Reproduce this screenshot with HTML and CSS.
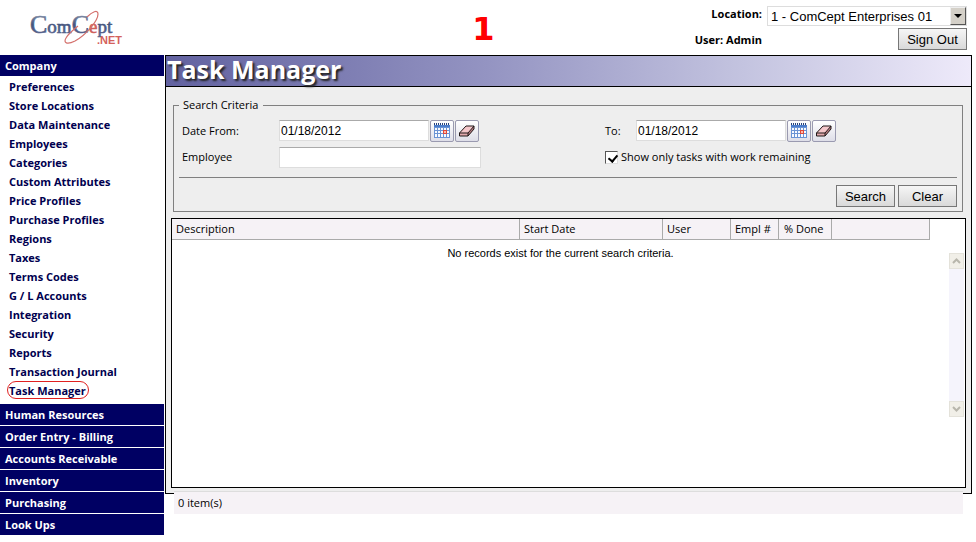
FILE: index.html
```html
<!DOCTYPE html>
<html lang="en">
<head>
  <meta charset="UTF-8">
  <meta name="viewport" content="width=device-width, initial-scale=1.0">
  <title>ComCept .NET - Task Manager</title>
  <link rel="stylesheet" href="styles.css">
</head>
<body>
  <header class="header">
    <svg class="logo" width="98" height="40" viewBox="0 0 98 40" role="img" aria-label="ComCept .NET">
      <defs>
        <linearGradient id="metal" x1="0" y1="0" x2="0" y2="1">
          <stop offset="0" stop-color="#9aa6b8"/>
          <stop offset="0.5" stop-color="#46557e"/>
          <stop offset="1" stop-color="#5f6a94"/>
        </linearGradient>
      </defs>
      <text class="logo-name" x="1" y="25"><tspan class="logo-cap">C</tspan><tspan>om</tspan><tspan class="logo-cap">C</tspan><tspan class="logo-e">e</tspan><tspan>pt</tspan></text>
      <path d="M58 9C63 4 69 1 69 6C69 13 57 27 46 33C38 37 34 35 37 30C39 26 44 22 49 18" fill="none" stroke="#d4706c" stroke-width="1.2"/>
      <text class="logo-net" x="68" y="36">.NET</text>
    </svg>
    <div class="step">1</div>
    <div class="session">
      <label for="location">Location:</label>
      <div class="select-wrap">
        <select id="location">
          <option>1 - ComCept Enterprises 01</option>
        </select>
        <span class="select-arrow"><svg width="8" height="4" viewBox="0 0 8 4"><path d="M0 0H8L4 4Z"/></svg></span>
      </div>
      <span class="user">User: Admin</span>
      <button class="btn sign-out" type="button">Sign Out</button>
    </div>
  </header>

  <div class="layout">
    <nav class="sidebar">
      <a class="section" href="#">Company</a>
      <ul class="menu">
        <li><a href="#">Preferences</a></li>
        <li><a href="#">Store Locations</a></li>
        <li><a href="#">Data Maintenance</a></li>
        <li><a href="#">Employees</a></li>
        <li><a href="#">Categories</a></li>
        <li><a href="#">Custom Attributes</a></li>
        <li><a href="#">Price Profiles</a></li>
        <li><a href="#">Purchase Profiles</a></li>
        <li><a href="#">Regions</a></li>
        <li><a href="#">Taxes</a></li>
        <li><a href="#">Terms Codes</a></li>
        <li><a href="#">G / L Accounts</a></li>
        <li><a href="#">Integration</a></li>
        <li><a href="#">Security</a></li>
        <li><a href="#">Reports</a></li>
        <li><a href="#">Transaction Journal</a></li>
        <li><a class="current" href="#">Task Manager</a></li>
      </ul>
      <a class="section" href="#">Human Resources</a>
      <a class="section" href="#">Order Entry - Billing</a>
      <a class="section" href="#">Accounts Receivable</a>
      <a class="section" href="#">Inventory</a>
      <a class="section" href="#">Purchasing</a>
      <a class="section" href="#">Look Ups</a>
    </nav>

    <main class="main">
      <div class="panel">
        <h1>Task Manager</h1>

        <form class="search">
          <fieldset>
            <legend>Search Criteria</legend>
            <div class="fields">
              <label for="dateFrom">Date From:</label>
              <div class="date">
                <input type="text" id="dateFrom" value="01/18/2012">
                <button class="icon-btn" type="button" aria-label="Pick start date"><svg width="16" height="16" viewBox="0 0 16 16"><use href="#calendar"/></svg></button>
                <button class="icon-btn" type="button" aria-label="Clear start date"><svg width="18" height="16" viewBox="0 0 18 16"><use href="#eraser"/></svg></button>
              </div>
              <label for="dateTo">To:</label>
              <div class="date">
                <input type="text" id="dateTo" value="01/18/2012">
                <button class="icon-btn" type="button" aria-label="Pick end date"><svg width="16" height="16" viewBox="0 0 16 16"><use href="#calendar"/></svg></button>
                <button class="icon-btn" type="button" aria-label="Clear end date"><svg width="18" height="16" viewBox="0 0 18 16"><use href="#eraser"/></svg></button>
              </div>
              <label for="employee">Employee</label>
              <input class="employee" type="text" id="employee">
              <label class="check"><input type="checkbox" checked>Show only tasks with work remaining</label>
            </div>
            <div class="actions">
              <button class="btn" type="button">Search</button>
              <button class="btn" type="button">Clear</button>
            </div>
          </fieldset>
        </form>

        <div class="results">
          <table>
            <thead>
              <tr>
                <th>Description</th>
                <th class="col-start">Start Date</th>
                <th class="col-user">User</th>
                <th class="col-empl">Empl #</th>
                <th class="col-done">% Done</th>
                <th class="col-extra"></th>
                <td class="col-rest"></td>
              </tr>
            </thead>
            <tbody>
              <tr><td class="empty" colspan="7">No records exist for the current search criteria.</td></tr>
            </tbody>
          </table>
          <div class="scrollbar">
            <button type="button" aria-label="Scroll up"><svg width="9" height="6" viewBox="0 0 9 6"><path d="M1 5L4.500 1.500L8 5"/></svg></button>
            <button type="button" aria-label="Scroll down"><svg width="9" height="6" viewBox="0 0 9 6"><path d="M1 1L4.500 4.500L8 1"/></svg></button>
          </div>
        </div>
      </div>
      <div class="status">0 item(s)</div>
    </main>
  </div>

  <svg class="sprite" width="0" height="0">
    <symbol id="calendar" viewBox="0 0 16 16">
      <rect x="0" y="2" width="16" height="13" fill="#6a93d4"/>
      <path d="M0 1H16" stroke="#27427c" stroke-width="2" stroke-dasharray="1 1"/>
      <rect x="0" y="2" width="16" height="2" fill="#4a7ccc"/>
      <path d="M1 5h2v2H1zM4 5h2v2H4zM7 5h2v2H7zM10 5h2v2h-2zM13 5h2v2h-2zM1 8h2v2H1zM4 8h2v2H4zM7 8h2v2H7zM13 8h2v2h-2zM1 11h2v3H1zM4 11h2v3H4zM7 11h2v3H7zM10 11h2v3h-2zM13 11h2v3h-2z" fill="#f8faff"/>
      <path d="M9 7h4v4H9z" fill="#e04838"/>
      <path d="M10 8h2v2h-2z" fill="#ffb8a8"/>
    </symbol>
    <symbol id="eraser" viewBox="0 0 18 16">
      <path d="M1 10L8 3H16L10 10Z" fill="#f4c6ca"/>
      <path d="M1 10H10V13H1Z" fill="#e0a8ac"/>
      <path d="M10 10L16 3V6L10 13Z" fill="#b87a80"/>
      <path d="M1.500 10L8 3H16V6L10 13H1.500ZM1.500 10H10L16 3M10 10V13" fill="none" stroke="#201818"/>
    </symbol>
  </svg>
</body>
</html>
```

FILE: styles.css
```css
:root {
  --navy: #000063;
  --panel: #eeeeee;
  --lilac: #f6f2f6;
  --gray: #808080;
}

* {
  box-sizing: border-box;
}

body {
  margin: 0;
  background: #fff;
  color: #000;
  font-family: "Open Sans", "Noto Sans", sans-serif;
  font-size: 11px;
  line-height: 16px;
}

input, select, button {
  font-family: "Liberation Sans", Arial, sans-serif;
  color: #000;
  margin: 0;
  border-radius: 0;
}

a {
  text-decoration: none;
}

.header {
  display: grid;
  grid-template-columns: 1fr auto 1fr;
  height: 55px;
  padding-right: 9px;
}

.logo {
  margin: 8px 0 0 29px;
}

.logo-name {
  font-family: "Liberation Serif", serif;
  font-size: 19px;
  fill: url(#metal);
  stroke: url(#metal);
  stroke-width: 0.6;
}

.logo-cap {
  font-size: 26px;
}

.logo-e {
  fill: #d0605c;
  stroke: #d0605c;
}

.logo-net {
  font: bold 11px "Liberation Sans", Arial, sans-serif;
  fill: #d4615c;
}

.step {
  color: #f00;
  font: bold 32px/58px "DejaVu Sans", sans-serif;
}

.session {
  display: grid;
  grid-template-columns: auto 200px;
  grid-template-rows: 20px 24px;
  column-gap: 5px;
  justify-content: end;
  align-items: center;
  align-content: start;
  padding-top: 6px;
  font-weight: bold;
  text-align: right;
}

.session label {
  padding-bottom: 4px;
}

.select-wrap {
  position: relative;
  height: 20px;
}

.select-wrap select {
  appearance: none;
  display: block;
  width: 100%;
  height: 20px;
  padding: 0 20px 0 3px;
  border: 1px solid #ddd;
  background: #fff;
  font-size: 13px;
}

.select-arrow {
  position: absolute;
  top: 1px;
  right: 1px;
  display: grid;
  place-items: center;
  width: 16px;
  height: 18px;
  background: #d4d0c8;
  border: 1px solid;
  border-color: #eee #555 #555 #eee;
  pointer-events: none;
}

.btn {
  width: 59px;
  height: 22px;
  padding: 0;
  border: 1px solid #777;
  background: linear-gradient(#f6f6f6, #d9d9d9);
  font-size: 13px;
}

.sign-out {
  width: 69px;
  justify-self: end;
  align-self: end;
}

.user {
  padding-top: 4px;
}

.layout {
  display: flex;
  align-items: flex-start;
}

.sidebar {
  width: 164px;
  flex: none;
  font-weight: bold;
}

.section {
  display: block;
  height: 21px;
  margin-bottom: 1px;
  padding-left: 5px;
  background: var(--navy);
  color: #fff;
  line-height: 22px;
}

.menu {
  list-style: none;
  margin: 0;
  padding: 0 0 4px 7px;
}

.menu li {
  height: 19px;
}

.menu a {
  display: inline-block;
  height: 18px;
  padding: 0 2px;
  line-height: 19px;
  color: #00004f;
}

.menu .current {
  padding: 0 2px 0 1px;
  border: 1px solid #e02020;
  border-radius: 9px;
  line-height: 17px;
}

.main {
  flex: 1;
  min-width: 0;
  padding: 0 4px 0 1px;
}

.panel {
  border: 1px solid #000;
  background: var(--panel);
  padding-bottom: 5px;
}

h1 {
  margin: 0;
  padding-left: 1px;
  height: 31px;
  border-bottom: 1px solid #000;
  background: linear-gradient(to right, #6262a0, #9494c2 40%, #c4c4e0 72%, #eeeafa);
  color: #fff;
  font-size: 25px;
  line-height: 27px;
  text-shadow: 2px 2px 2px #222;
}

.search {
  margin: 10px 8px 7px 7px;
}

fieldset {
  margin: 0;
  padding: 7px 5px 4px;
  border: 1px solid var(--gray);
}

legend {
  padding: 0 5px 0 4px;
}

.fields {
  display: grid;
  grid-template-columns: 97px minmax(202px, 326px) 31px 1fr;
  grid-template-rows: 22px 22px;
  row-gap: 4px;
  align-items: center;
  padding: 0 0 9px 3px;
  border-bottom: 1px solid var(--gray);
}

.fields input[type="text"] {
  height: 21px;
  padding: 0 1px;
  border: 1px solid #ddd;
  border-top-color: #aaa;
  background: #fff;
  font-size: 12px;
}

.date {
  display: flex;
  gap: 1px;
}

.date input {
  width: 150px;
}

.employee {
  width: 202px;
}

.icon-btn {
  display: grid;
  place-items: center;
  width: 24px;
  height: 22px;
  padding: 0;
  border: 1px solid #9a9ab0;
  border-radius: 2px;
  background: linear-gradient(#fff, #dedee8);
}

.check {
  grid-column: 3 / 5;
  display: flex;
  align-items: center;
  gap: 3px;
}

.check input {
  appearance: none;
  width: 13px;
  height: 13px;
  border: 1px solid;
  border-color: #555 #ddd #ddd #555;
  background: #fff;
}

.check input:checked::before {
  content: "";
  display: block;
  width: 4px;
  height: 7px;
  margin: 1px 0 0 4px;
  border: solid #000;
  border-width: 0 2px 2px 0;
  transform: rotate(40deg);
}

.actions {
  display: flex;
  justify-content: flex-end;
  gap: 3px;
  padding-top: 7px;
}

.results {
  display: flex;
  min-height: 270px;
  margin: 0 5px;
  border: 1px solid #000;
  background: #fff;
}

.search + .results {
  margin-top: -1px;
}

table {
  flex: 1;
  align-self: flex-start;
  border-collapse: separate;
  border-spacing: 0;
  table-layout: fixed;
}

th {
  height: 21px;
  padding: 0 4px;
  border-right: 1px solid #aaa;
  border-bottom: 1px solid #aaa;
  background: var(--lilac);
  font-weight: normal;
  text-align: left;
  white-space: nowrap;
}

.col-start {
  width: 143px;
}

.col-user {
  width: 68px;
}

.col-empl {
  width: 48px;
}

.col-done {
  width: 53px;
  padding-left: 5px;
}

.col-extra {
  width: 98px;
}

.col-rest {
  width: 19px;
  padding: 0;
}

.empty {
  height: 26px;
  padding: 0;
  font-family: "Liberation Sans", Arial, sans-serif;
  text-align: center;
}

.scrollbar {
  display: flex;
  flex-direction: column;
  justify-content: space-between;
  width: 15px;
  height: 164px;
  margin: 34px 1px 0 0;
  background: #f5f4fc;
}

.scrollbar button {
  display: grid;
  place-items: center;
  width: 15px;
  height: 16px;
  padding: 0;
  border: 1px solid #e4e2da;
  background: #f1efe8;
}

.scrollbar path {
  fill: none;
  stroke: #b8b6ac;
  stroke-width: 2;
}

/* the status strip sits over the lower edge of the panel */
.status {
  position: relative;
  height: 23px;
  margin: -3px 9px 0;
  padding-left: 4px;
  border-top: 1px solid #ddd;
  background: var(--lilac);
  line-height: 22px;
}

.sprite {
  display: block;
}
```
